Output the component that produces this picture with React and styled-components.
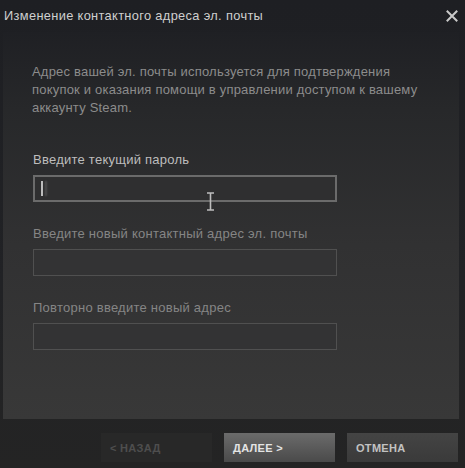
import React from 'react'
import styled, { createGlobalStyle } from 'styled-components'

const GlobalStyle = createGlobalStyle`
  html, body {
    margin: 0;
    padding: 0;
    background: #222325;
  }
`

const fields = [
  { label: 'Введите текущий пароль', active: true },
  { label: 'Введите новый контактный адрес эл. почты' },
  { label: 'Повторно введите новый адрес' },
]

const App = () => {
  return (
    <Dialog>
      <GlobalStyle />
      <TitleBar>
        <Title>Изменение контактного адреса эл. почты</Title>
        <Close>
          <svg width="12" height="12" viewBox="0 0 12 12">
            <path d="M1.5 1.5 L10.5 10.5 M10.5 1.5 L1.5 10.5" stroke="#c9c9c9" strokeWidth="2" strokeLinecap="square" />
          </svg>
        </Close>
      </TitleBar>
      <Panel>
        <Description>
          Адрес вашей эл. почты используется для подтверждения
          <br />
          покупок и оказания помощи в управлении доступом к вашему
          <br />
          аккаунту Steam.
        </Description>
        <Form>
          {fields.map((f, i) => (
            <Field key={i}>
              <Label active={f.active}>{f.label}</Label>
              <Box active={f.active}>
                {f.active && <Caret />}
                {f.active && (
                  <Pointer>
                    <svg width="9" height="19" viewBox="0 0 9 19">
                      <path d="M1 1 H8 M4.5 1 V18 M1 18 H8" stroke="#bdbdbd" strokeWidth="1.6" fill="none" />
                    </svg>
                  </Pointer>
                )}
              </Box>
            </Field>
          ))}
        </Form>
      </Panel>
      <Footer>
        <Button kind="disabled">&lt; НАЗАД</Button>
        <Button kind="primary">ДАЛЕЕ &gt;</Button>
        <Button>ОТМЕНА</Button>
      </Footer>
    </Dialog>
  )
}

const Dialog = styled.div`
  width: 465px;
  height: 468px;
  background: linear-gradient(to bottom, #1e1f23 0%, #212225 60%, #242424 100%);
  font-family: "Liberation Sans", Arial, sans-serif;
  display: flex;
  flex-direction: column;
  overflow: hidden;
`

const TitleBar = styled.div`
  height: 32px;
  display: flex;
  align-items: flex-start;
  justify-content: space-between;
  padding: 9px 7px 0 4px;
  box-sizing: border-box;
`

const Title = styled.div`
  color: #cfcfcf;
  font-size: 12.8px;
  letter-spacing: 0.35px;
  line-height: 14px;
`

const Close = styled.div`
  width: 12px;
  height: 12px;
  margin-top: 1px;
  display: flex;
`

const Panel = styled.div`
  margin: 0 6px 0 3px;
  height: 387px;
  box-sizing: border-box;
  padding: 31px 29px 0 29px;
  background: linear-gradient(to bottom, #1f2024 0%, #27282a 20%, #313132 55%, #383838 100%);
`

const Description = styled.p`
  margin: 0;
  white-space: nowrap;
  color: #8c8c8c;
  font-size: 13px;
  letter-spacing: 0.2px;
  line-height: 18px;
`

const Form = styled.div`
  margin-top: 36px;
  display: flex;
  flex-direction: column;
  gap: 25px;
`

const Field = styled.div`
  display: flex;
  flex-direction: column;
  gap: 8px;
`

const Label = styled.div`
  color: ${({ active }) => (active ? '#bdbdbd' : '#858585')};
  font-size: 13px;
  letter-spacing: 0.25px;
  line-height: 14px;
  padding-left: 1px;
`

const Box = styled.div`
  position: relative;
  width: 304px;
  height: 27px;
  box-sizing: border-box;
  margin-left: 1px;
  background: ${({ active }) => (active ? '#2f2f30' : '#333334')};
  border: ${({ active }) => (active ? '2px solid #6b6b6b' : '1px solid #505050')};
`

const Caret = styled.span`
  position: absolute;
  left: 6px;
  top: 4px;
  width: 2px;
  height: 15px;
  background: #bcbcbc;
  box-shadow: 4px 0 2px rgba(140, 140, 140, 0.35);
`

const Pointer = styled.div`
  position: absolute;
  left: 171px;
  top: 15px;
  display: flex;
`

const Footer = styled.div`
  flex: 1;
  display: flex;
  justify-content: flex-end;
  align-items: flex-start;
  gap: 12px;
  padding: 14px 7px 0 0;
`

const Button = styled.div`
  width: 111px;
  height: 29px;
  box-sizing: border-box;
  padding-left: 9px;
  display: flex;
  align-items: center;
  font-size: 11px;
  font-weight: bold;
  letter-spacing: 0.3px;
  color: ${({ kind }) => (kind === 'disabled' ? '#4e4e4e' : kind === 'primary' ? '#e4e4e4' : '#c2c2c2')};
  background: ${({ kind }) =>
    kind === 'disabled'
      ? '#282828'
      : kind === 'primary'
      ? 'linear-gradient(to bottom, #6b6b6b, #4a4a4a)'
      : 'linear-gradient(to bottom, #444444, #3a3a3a)'};
`

export default App
